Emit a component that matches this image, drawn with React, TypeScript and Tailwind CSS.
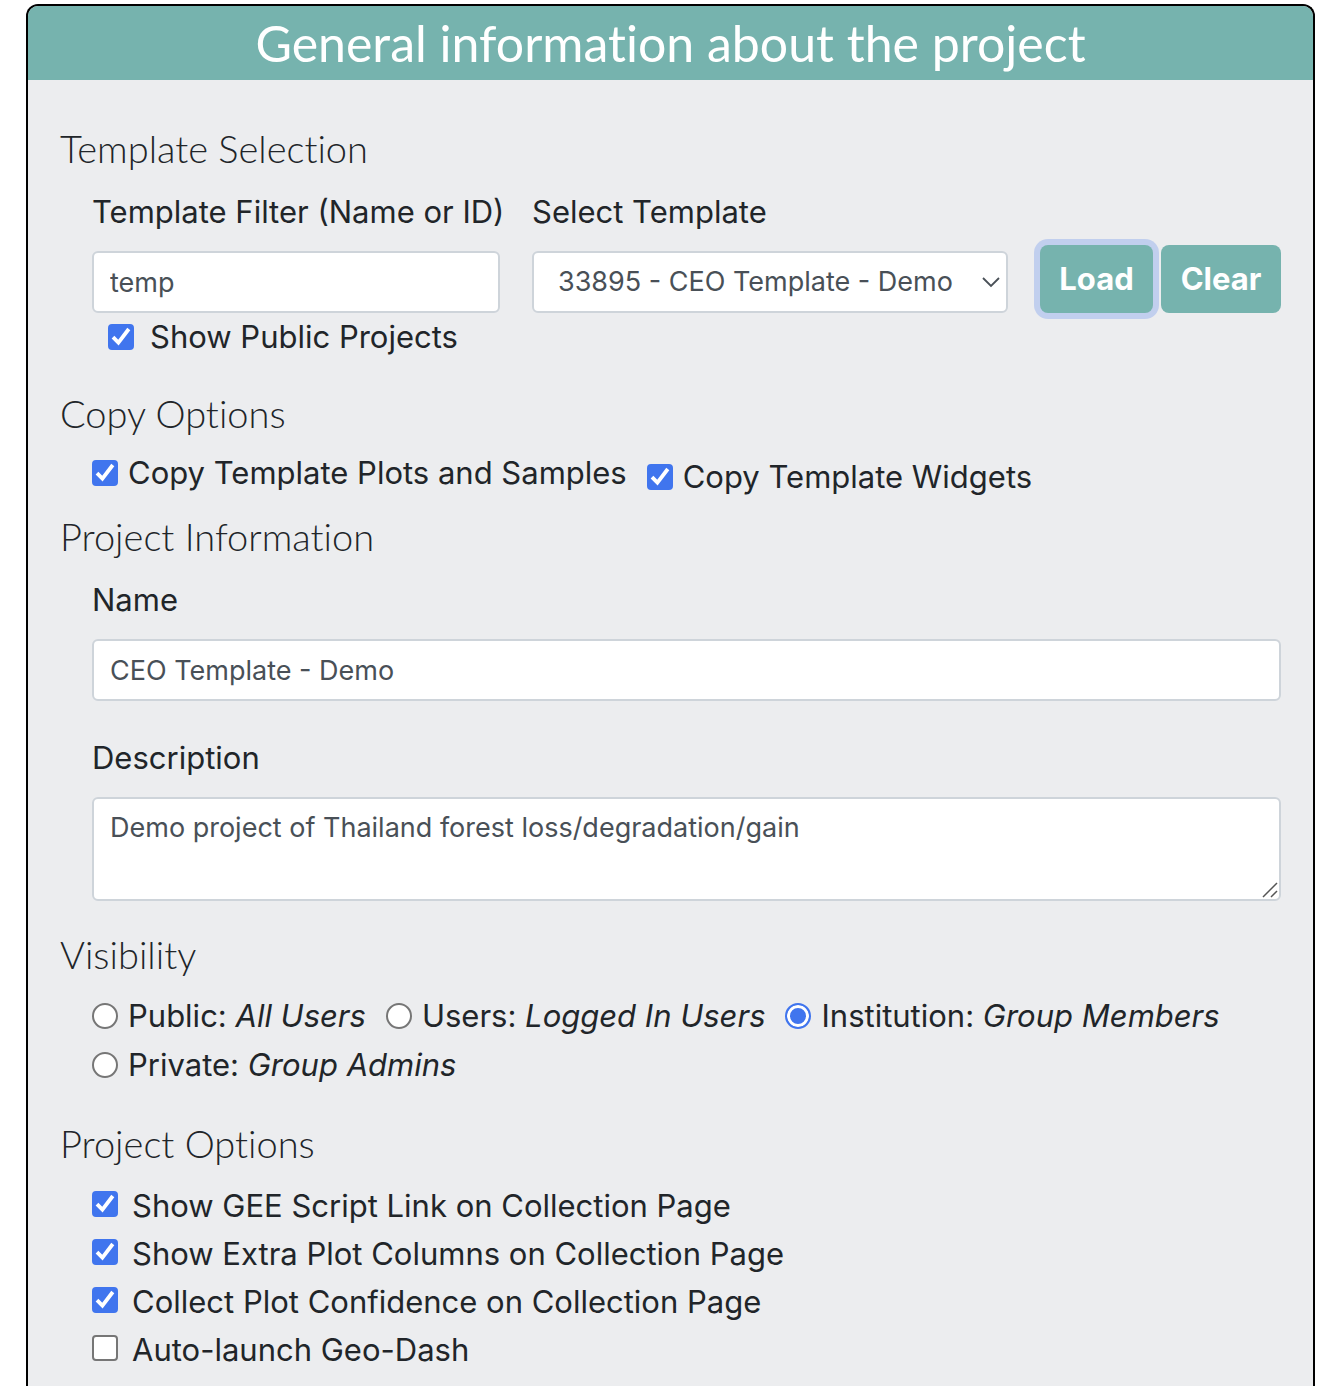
import { ReactNode, useState } from "react";

const fieldClass =
  "block w-full rounded-[6px] border-2 border-[#ced4da] bg-white px-4 text-[27px] leading-[42px] text-[#495057] outline-none";

function Section({ title, children }: { title: string; children: ReactNode }) {
  return (
    <section>
      <h3 className="font-['Lato'] text-[38px] leading-[46px] font-light [font-variant-ligatures:none]">
        {title}
      </h3>
      <div className="pt-[2px] pl-8">{children}</div>
    </section>
  );
}

function Check({
  id,
  label,
  on = true,
  className = "items-center gap-[10px]",
}: {
  id: string;
  label: string;
  on?: boolean;
  className?: string;
}) {
  return (
    <div className={`flex ${className}`}>
      <span className="relative size-[26px] shrink-0">
        <input
          id={id}
          type="checkbox"
          defaultChecked={on}
          className="peer block size-[26px] appearance-none rounded-[4px] border-2 border-[#767676] bg-white checked:border-[#4075ee] checked:bg-[#4075ee]"
        />
        <svg
          className="pointer-events-none absolute inset-0 hidden size-[26px] peer-checked:block"
          viewBox="0 0 26 26"
          fill="none"
          stroke="#fff"
          strokeWidth="3.8"
        >
          <path d="M5 13.2 10.4 18.6 20.8 5" />
        </svg>
      </span>
      <label htmlFor={id} className="leading-[48px]">
        {label}
      </label>
    </div>
  );
}

const visibilities = [
  { id: "public", label: "Public", who: "All Users" },
  { id: "users", label: "Users", who: "Logged In Users" },
  { id: "institution", label: "Institution", who: "Group Members" },
  { id: "private", label: "Private", who: "Group Admins" },
];

const options = [
  { id: "gee", label: "Show GEE Script Link on Collection Page", on: true },
  { id: "extra", label: "Show Extra Plot Columns on Collection Page", on: true },
  { id: "confidence", label: "Collect Plot Confidence on Collection Page", on: true },
  { id: "geodash", label: "Auto-launch Geo-Dash", on: false },
];

export default function App() {
  const [visibility, setVisibility] = useState("institution");

  return (
    <div className="min-h-screen bg-white pt-1 pr-[21px] pl-[26px] font-['Inter',sans-serif] text-[31px] text-[#212529]">
      <form
        className="overflow-hidden rounded-t-[12px] border-2 border-b-0 border-black bg-[#ecedef]"
        onSubmit={(e) => e.preventDefault()}
      >
        <h2 className="bg-[#76b3ae] text-center font-['Lato'] text-[50px] leading-[74px] font-normal text-white [font-variant-ligatures:none]">
          General information about the project
        </h2>

        <div className="px-8 pt-[45px] pb-8">
          <Section title="Template Selection">
            <div className="mt-[15px] grid grid-cols-[minmax(0,408fr)_minmax(0,476fr)_auto] gap-x-8">
              <div>
                <label htmlFor="filter" className="mb-[15px] block leading-[48px] whitespace-nowrap">
                  Template Filter (Name or ID)
                </label>
                <input id="filter" className={`${fieldClass} h-[62px]`} defaultValue="temp" />
                <Check
                  id="show-public"
                  label="Show Public Projects"
                  className="items-center gap-4 pl-4"
                />
              </div>
              <div>
                <label htmlFor="template" className="mb-[15px] block leading-[48px]">
                  Select Template
                </label>
                <div className="relative">
                  <select
                    id="template"
                    className="block h-[62px] w-full appearance-none rounded-[6px] border-2 border-[#ced4da] bg-white pr-[46px] pl-6 text-[27px] text-[#495057] outline-none"
                  >
                    <option>33895 - CEO Template - Demo</option>
                  </select>
                  <svg
                    className="pointer-events-none absolute top-[25px] right-2 h-3 w-[18px]"
                    viewBox="0 0 18 12"
                    fill="none"
                    stroke="#495057"
                    strokeWidth="1.8"
                  >
                    <path d="M1 2 9 10 17 2" />
                  </svg>
                </div>
              </div>
              <div className="flex gap-2 pt-[57px] font-bold text-white">
                <button
                  type="button"
                  className="h-[68px] w-[113px] rounded-[8px] bg-[#76b3ae] ring-6 ring-[#c1cfee]"
                >
                  Load
                </button>
                <button type="button" className="h-[68px] w-[120px] rounded-[8px] bg-[#76b3ae]">
                  Clear
                </button>
              </div>
            </div>
          </Section>

          <div className="mt-[29px]">
            <Section title="Copy Options">
              <div className="mt-[11px] flex flex-wrap items-start gap-x-5">
                <Check id="copy-plots" label="Copy Template Plots and Samples" />
                <Check
                  id="copy-widgets"
                  label="Copy Template Widgets"
                  className="items-center gap-[10px] pt-1"
                />
              </div>
            </Section>
          </div>

          <div className="mt-3">
            <Section title="Project Information">
              <label htmlFor="name" className="mt-[15px] mb-[15px] block leading-[48px]">
                Name
              </label>
              <input id="name" className={`${fieldClass} h-[62px]`} defaultValue="CEO Template - Demo" />
              <label htmlFor="description" className="mt-[33px] mb-[15px] block leading-[48px]">
                Description
              </label>
              <div className="relative">
                <textarea
                  id="description"
                  className={`${fieldClass} h-[104px] resize-y py-2`}
                  defaultValue="Demo project of Thailand forest loss/degradation/gain"
                />
                <svg
                  className="pointer-events-none absolute right-[3px] bottom-[3px] size-4 bg-white"
                  viewBox="0 0 16 16"
                  fill="none"
                  stroke="#555"
                  strokeWidth="1.5"
                >
                  <path d="M1 15 15 1M9 15 15 9" />
                </svg>
              </div>
            </Section>
          </div>

          <div className="mt-[30px]">
            <Section title="Visibility">
              <div className="mt-[13px] flex flex-wrap gap-x-5 gap-y-px">
                {visibilities.map((v) => (
                  <div key={v.id} className="flex items-center gap-[10px]">
                    <input
                      id={v.id}
                      type="radio"
                      name="visibility"
                      checked={visibility === v.id}
                      onChange={() => setVisibility(v.id)}
                      className="size-[26px] shrink-0 appearance-none rounded-full border-2 border-[#767676] bg-white checked:border-[#4075ee] checked:bg-[#4075ee] checked:inset-ring-3 checked:inset-ring-white"
                    />
                    <label htmlFor={v.id} className="leading-[48px]">
                      {v.label}: <i>{v.who}</i>
                    </label>
                  </div>
                ))}
              </div>
            </Section>
          </div>

          <div className="mt-[31px]">
            <Section title="Project Options">
              <div className="mt-[14px]">
                {options.map((o) => (
                  <Check
                    key={o.id}
                    id={o.id}
                    label={o.label}
                    on={o.on}
                    className="items-start gap-[14px] [&>span]:mt-[9px]"
                  />
                ))}
              </div>
            </Section>
          </div>
        </div>
      </form>
    </div>
  );
}
